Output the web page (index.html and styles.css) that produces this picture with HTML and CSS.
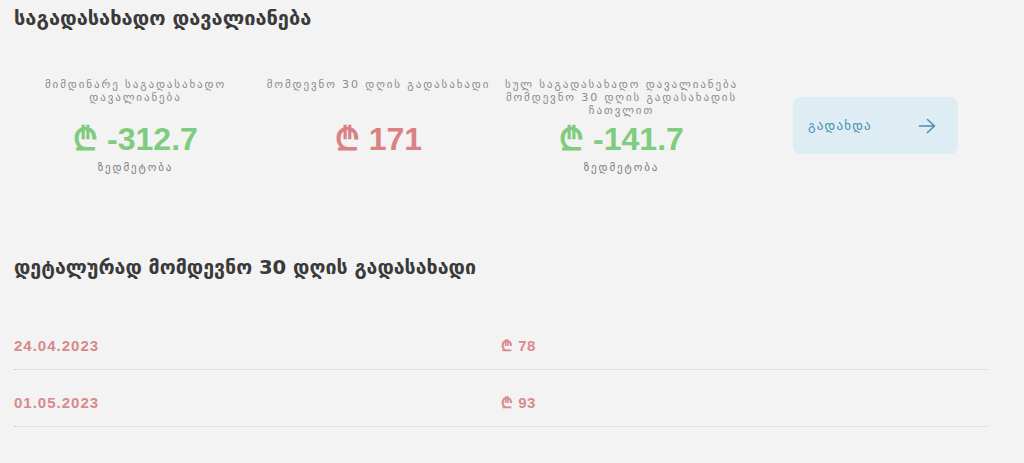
FILE: index.html
```html
<!DOCTYPE html>
<html lang="ka">
<head>
<meta charset="utf-8">
<title>საგადასახადო დავალიანება</title>
<link rel="stylesheet" href="styles.css">
</head>
<body>
<main class="page">
  <h1 class="title">საგადასახადო დავალიანება</h1>
  <section class="summary">
    <div class="stat">
      <div class="stat-label">მიმდინარე საგადასახადო დავალიანება</div>
      <div class="stat-value positive">₾ -312.7</div>
      <div class="stat-note">ზედმეტობა</div>
    </div>
    <div class="stat">
      <div class="stat-label">მომდევნო 30 დღის გადასახადი</div>
      <div class="stat-value negative">₾ 171</div>
    </div>
    <div class="stat">
      <div class="stat-label">სულ საგადასახადო დავალიანება მომდევნო 30 დღის გადასახადის ჩათვლით</div>
      <div class="stat-value positive">₾ -141.7</div>
      <div class="stat-note">ზედმეტობა</div>
    </div>
    <div class="pay-wrap">
      <button class="pay-btn" type="button">
        <span>გადახდა</span>
        <svg class="arrow" width="18" height="16" viewBox="0 0 18 16" fill="none" stroke="currentColor" stroke-width="1.6" stroke-linecap="round" stroke-linejoin="round"><path d="M1.5 8H16.5M9.5 1.5L16.5 8L9.5 14.5"/></svg>
      </button>
    </div>
  </section>
  <h2 class="subtitle">დეტალურად მომდევნო 30 დღის გადასახადი</h2>
  <div class="rows">
    <div class="row"><span class="date">24.04.2023</span><span class="amount">₾ 78</span></div>
    <div class="row"><span class="date">01.05.2023</span><span class="amount">₾ 93</span></div>
  </div>
</main>
</body>
</html>
```
FILE: styles.css
```css
html, body {
  margin: 0;
  padding: 0;
  background: #f3f3f3;
}
body {
  font-family: "DejaVu Sans", "Liberation Sans", sans-serif;
  color: #333;
}
.page {
  padding: 0 36px 0 14px;
}
.title {
  margin: 0;
  padding-top: 6px;
  font-size: 20px;
  line-height: 24px;
  font-weight: bold;
  color: #3a3a3a;
}
.summary {
  display: flex;
  align-items: flex-start;
  margin-top: 48px;
}
.stat {
  width: 243px;
  padding: 0 2px;
  box-sizing: border-box;
  display: flex;
  flex-direction: column;
  align-items: center;
  text-align: center;
}
.stat-label {
  font-size: 11px;
  line-height: 13px;
  letter-spacing: 1.9px;
  color: #8a8a8a;
  min-height: 39px;
}
.stat-value {
  font-family: "Liberation Sans", "DejaVu Sans", sans-serif;
  font-weight: bold;
  font-size: 32px;
  line-height: 40px;
  margin-top: 2px;
}
.positive { color: #7fcb7f; }
.negative { color: #d98183; }
.stat-note {
  margin-top: 2px;
  font-size: 11px;
  line-height: 13px;
  letter-spacing: 1.9px;
  color: #7a7a7a;
}
.pay-wrap {
  margin-left: 50px;
  padding-top: 19px;
}
.pay-btn {
  width: 165px;
  height: 57px;
  border: none;
  border-radius: 8px;
  background: #deedf3;
  color: #4b8fb2;
  font-family: "DejaVu Sans", sans-serif;
  font-size: 13px;
  letter-spacing: 1.2px;
  font-weight: normal;
  display: flex;
  align-items: center;
  justify-content: space-between;
  padding: 0 22px 0 15px;
  box-sizing: border-box;
}
.arrow { display: block; }
.subtitle {
  margin: 0;
  margin-top: 82px;
  font-size: 19.6px;
  line-height: 24px;
  font-weight: bold;
  color: #3a3a3a;
}
.rows {
  margin-top: 33px;
}
.row {
  display: grid;
  grid-template-columns: 1fr 1fr;
  padding: 24px 0 14px;
  line-height: 18px;
  border-bottom: 1px dotted #cfcfcf;
  font-family: "Liberation Sans", "DejaVu Sans", sans-serif;
  font-weight: bold;
  font-size: 15px;
  color: #d88a8c;
}
.date { letter-spacing: 1px; }
.amount { letter-spacing: 0.5px; }
```
